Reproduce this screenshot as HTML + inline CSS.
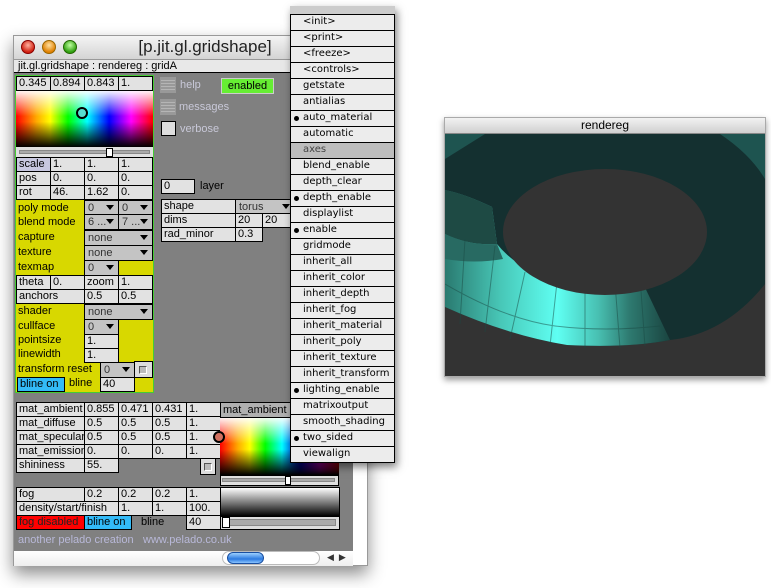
<!DOCTYPE html>
<html><head><meta charset="utf-8"><style>
*{margin:0;padding:0;box-sizing:border-box}
body{width:771px;height:588px;background:#fff;position:relative;overflow:hidden;font-family:"Liberation Sans","DejaVu Sans",sans-serif;font-size:11px;color:#000}
.a{position:absolute}
.c{position:absolute;border:1px solid #000;background:#e2e2e2;padding-left:2px;line-height:13px;height:15px;white-space:nowrap;overflow:hidden}
.y{position:absolute;line-height:14px;padding-left:2px;white-space:nowrap}
.d{position:absolute;border:1px solid #000;background:#c4c4c4;color:#333;padding-left:3px;line-height:14px;height:16px;white-space:nowrap;overflow:hidden}
.d:after{content:"";position:absolute;right:4px;top:4px;border-left:4px solid transparent;border-right:4px solid transparent;border-top:5px solid #000}
.m{position:absolute;left:0;width:105px;height:17px;border:1px solid #000;background:#ececec;padding-left:12px;line-height:14px;font-family:"DejaVu Sans",sans-serif;font-size:10px}
.m.b:before{content:"";position:absolute;left:3px;top:5px;width:5px;height:5px;border-radius:50%;background:#000}
</style></head><body>

<div class="a" style="left:13px;top:35px;width:355px;height:531px;background:#fff;box-shadow:0 8px 16px rgba(0,0,0,.45);border:1px solid #999"></div>
<div class="a" style="left:14px;top:36px;width:353px;height:23px;background:linear-gradient(#f4f4f4,#d4d4d4)"></div>
<div class="a" style="left:21px;top:40px;width:14px;height:14px;border-radius:50%;background:radial-gradient(circle at 50% 35%,#ffb0a0,#d02010 70%);border:1px solid #800"></div>
<div class="a" style="left:42px;top:40px;width:14px;height:14px;border-radius:50%;background:radial-gradient(circle at 50% 35%,#ffe0a0,#e08000 70%);border:1px solid #960"></div>
<div class="a" style="left:63px;top:40px;width:14px;height:14px;border-radius:50%;background:radial-gradient(circle at 50% 35%,#c0ffa0,#30a010 70%);border:1px solid #260"></div>
<div class="a" style="left:90px;top:37px;width:230px;text-align:center;font-size:17px;color:#222">[p.jit.gl.gridshape]</div>
<div class="a" style="left:14px;top:59px;width:339px;height:14px;background:#e8e8e8;border-bottom:1px solid #000;border-top:1px solid #999;padding-left:4px;line-height:12px">jit.gl.gridshape : rendereg : gridA</div>
<div class="a" style="left:14px;top:73px;width:339px;height:478px;background:#808080"></div>
<div class="a" style="left:353px;top:59px;width:14px;height:492px;background:#fff"></div>
<div class="a" style="left:14px;top:551px;width:339px;height:15px;background:linear-gradient(#fff,#eee)"></div>
<div class="a" style="left:222px;top:551px;width:98px;height:14px;border-radius:7px;border:1px solid #bbb;background:#fff"></div>
<div class="a" style="left:227px;top:552px;width:37px;height:12px;border-radius:6px;background:linear-gradient(#9cd0ff,#2c7ae0 60%,#8ac4ff);border:1px solid #1a4fa0"></div>
<div class="a" style="left:327px;top:552px;font-size:9px;color:#333">◀&nbsp;&nbsp;▶</div>

<div class="a" style="left:15px;top:75px;width:139px;height:318px;background:#d8d800;border:1px solid #44cc33"></div>
<div class="c" style="left:16px;top:76px;width:35px">0.345</div>
<div class="c" style="left:50px;top:76px;width:35px">0.894</div>
<div class="c" style="left:84px;top:76px;width:35px">0.843</div>
<div class="c" style="left:118px;top:76px;width:35px">1.</div>
<div class="a" style="left:16px;top:91px;width:137px;height:56px;background:linear-gradient(to bottom,rgba(255,255,255,.95),rgba(255,255,255,0) 45%,rgba(0,0,0,0) 55%,#000),linear-gradient(to right,#f00,#fa0 15%,#ff0 25%,#0f0 38%,#0ff 52%,#00f 68%,#f0f 84%,#f00)"></div>
<div class="a" style="left:76px;top:107px;width:12px;height:12px;border-radius:50%;border:2px solid #000;background:#58dcd0"></div>
<div class="a" style="left:16px;top:147px;width:137px;height:10px;background:#e0e0e0"></div>
<div class="a" style="left:19px;top:150px;width:131px;height:4px;background:#aaa;border:1px solid #888"></div>
<div class="a" style="left:106px;top:148px;width:7px;height:9px;background:#fff;border:1px solid #000"></div>
<div class="c" style="left:16px;top:157px;width:35px;background:#c8c8e0">scale</div>
<div class="c" style="left:50px;top:157px;width:35px">1.</div><div class="c" style="left:84px;top:157px;width:35px">1.</div><div class="c" style="left:118px;top:157px;width:35px">1.</div>
<div class="c" style="left:16px;top:171px;width:35px">pos</div>
<div class="c" style="left:50px;top:171px;width:35px">0.</div><div class="c" style="left:84px;top:171px;width:35px">0.</div><div class="c" style="left:118px;top:171px;width:35px">0.</div>
<div class="c" style="left:16px;top:185px;width:35px">rot</div>
<div class="c" style="left:50px;top:185px;width:35px">46.</div><div class="c" style="left:84px;top:185px;width:35px">1.62</div><div class="c" style="left:118px;top:185px;width:35px">0.</div>
<div class="y" style="left:16px;top:201px">poly mode</div>
<div class="d" style="left:84px;top:200px;width:35px">0</div><div class="d" style="left:118px;top:200px;width:35px">0</div>
<div class="y" style="left:16px;top:215px">blend mode</div>
<div class="d" style="left:84px;top:214px;width:35px">6 ...</div><div class="d" style="left:118px;top:214px;width:35px">7 ...</div>
<div class="y" style="left:16px;top:230px">capture</div>
<div class="d" style="left:84px;top:230px;width:69px">none</div>
<div class="y" style="left:16px;top:245px">texture</div>
<div class="d" style="left:84px;top:245px;width:69px">none</div>
<div class="y" style="left:16px;top:260px">texmap</div>
<div class="d" style="left:84px;top:260px;width:35px">0</div>
<div class="c" style="left:16px;top:275px;width:35px">theta</div><div class="c" style="left:50px;top:275px;width:35px">0.</div><div class="c" style="left:84px;top:275px;width:35px">zoom</div><div class="c" style="left:118px;top:275px;width:35px">1.</div>
<div class="c" style="left:16px;top:289px;width:69px">anchors</div><div class="c" style="left:84px;top:289px;width:35px">0.5</div><div class="c" style="left:118px;top:289px;width:35px">0.5</div>
<div class="y" style="left:16px;top:304px">shader</div>
<div class="d" style="left:84px;top:304px;width:69px">none</div>
<div class="y" style="left:16px;top:319px">cullface</div>
<div class="d" style="left:84px;top:319px;width:35px">0</div>
<div class="y" style="left:16px;top:333px">pointsize</div>
<div class="c" style="left:84px;top:334px;width:35px">1.</div>
<div class="y" style="left:16px;top:347px">linewidth</div>
<div class="c" style="left:84px;top:348px;width:35px">1.</div>
<div class="y" style="left:16px;top:362px">transform reset</div>
<div class="d" style="left:100px;top:362px;width:35px">0</div>
<div class="a" style="left:134px;top:361px;width:19px;height:17px;border:1px solid #000;background:#ddd"><div class="a" style="left:4px;top:4px;width:8px;height:8px;border:1px solid #555;border-right-color:#fff;border-bottom-color:#fff;background:#bbb"></div></div>
<div class="c" style="left:17px;top:377px;width:48px;background:#33bbf8;height:15px">bline on</div>
<div class="y" style="left:67px;top:376px">bline</div>
<div class="c" style="left:100px;top:377px;width:35px">40</div>

<div class="a" style="left:160px;top:77px;width:16px;height:16px;background:repeating-linear-gradient(#999 0 2px,#b5b5b5 2px 3px);border:1px solid #999"></div>
<div class="a" style="left:180px;top:79px;color:#c8c8d8;font-size:11px">help</div>
<div class="a" style="left:221px;top:78px;width:53px;height:16px;background:#66ee33;border:1px solid #ccc;text-align:center;line-height:14px">enabled</div>
<div class="a" style="left:160px;top:99px;width:16px;height:16px;background:repeating-linear-gradient(#999 0 2px,#b5b5b5 2px 3px);border:1px solid #999"></div>
<div class="a" style="left:179px;top:101px;color:#c8c8d8;font-size:11px">messages</div>
<div class="a" style="left:161px;top:121px;width:15px;height:15px;background:#ddd;border:1px solid #000"></div>
<div class="a" style="left:180px;top:123px;color:#c8c8d8;font-size:11px">verbose</div>
<div class="c" style="left:161px;top:179px;width:34px">0</div>
<div class="a" style="left:200px;top:180px;font-size:11px">layer</div>
<div class="c" style="left:161px;top:199px;width:75px">shape</div>
<div class="d" style="left:235px;top:199px;width:60px">torus</div>
<div class="c" style="left:161px;top:213px;width:75px">dims</div>
<div class="c" style="left:235px;top:213px;width:28px">20</div><div class="c" style="left:262px;top:213px;width:33px">20</div>
<div class="c" style="left:161px;top:227px;width:75px">rad_minor</div>
<div class="c" style="left:235px;top:227px;width:28px">0.3</div>

<div class="c" style="left:16px;top:402px;width:69px">mat_ambient</div><div class="c" style="left:84px;top:402px;width:35px">0.855</div><div class="c" style="left:118px;top:402px;width:35px">0.471</div><div class="c" style="left:152px;top:402px;width:35px">0.431</div><div class="c" style="left:186px;top:402px;width:35px">1.</div>
<div class="c" style="left:16px;top:416px;width:69px">mat_diffuse</div><div class="c" style="left:84px;top:416px;width:35px">0.5</div><div class="c" style="left:118px;top:416px;width:35px">0.5</div><div class="c" style="left:152px;top:416px;width:35px">0.5</div><div class="c" style="left:186px;top:416px;width:35px">1.</div>
<div class="c" style="left:16px;top:430px;width:69px">mat_specular</div><div class="c" style="left:84px;top:430px;width:35px">0.5</div><div class="c" style="left:118px;top:430px;width:35px">0.5</div><div class="c" style="left:152px;top:430px;width:35px">0.5</div><div class="c" style="left:186px;top:430px;width:35px">1.</div>
<div class="c" style="left:16px;top:444px;width:69px">mat_emission</div><div class="c" style="left:84px;top:444px;width:35px">0.</div><div class="c" style="left:118px;top:444px;width:35px">0.</div><div class="c" style="left:152px;top:444px;width:35px">0.</div><div class="c" style="left:186px;top:444px;width:35px">1.</div>
<div class="c" style="left:16px;top:458px;width:69px">shininess</div><div class="c" style="left:84px;top:458px;width:35px">55.</div>
<div class="a" style="left:200px;top:458px;width:16px;height:17px;border:1px solid #000;background:#ddd"><div class="a" style="left:3px;top:4px;width:8px;height:8px;border:1px solid #555;border-right-color:#fff;border-bottom-color:#fff;background:#bbb"></div></div>
<div class="a" style="left:220px;top:402px;width:119px;height:16px;background:#b0b0b0;border:1px solid #000;padding-left:2px;line-height:14px">mat_ambient</div>
<div class="a" style="left:220px;top:418px;width:119px;height:57px;background:linear-gradient(to bottom,rgba(255,255,255,.95),rgba(255,255,255,0) 45%,rgba(0,0,0,0) 55%,#000),linear-gradient(to right,#f00,#fa0 15%,#ff0 25%,#0f0 38%,#0ff 52%,#00f 68%,#f0f 84%,#f00)"></div>
<div class="a" style="left:213px;top:431px;width:12px;height:12px;border-radius:50%;border:2px solid #000;background:#d07060"></div>
<div class="a" style="left:220px;top:475px;width:119px;height:11px;background:#e0e0e0;border:1px solid #000"></div>
<div class="a" style="left:222px;top:478px;width:113px;height:4px;background:#aaa;border:1px solid #888"></div>
<div class="a" style="left:285px;top:476px;width:6px;height:9px;background:#fff;border:1px solid #000"></div>
<div class="c" style="left:16px;top:487px;width:69px">fog</div><div class="c" style="left:84px;top:487px;width:35px">0.2</div><div class="c" style="left:118px;top:487px;width:35px">0.2</div><div class="c" style="left:152px;top:487px;width:35px">0.2</div><div class="c" style="left:186px;top:487px;width:35px">1.</div>
<div class="c" style="left:16px;top:501px;width:103px">density/start/finish</div><div class="c" style="left:118px;top:501px;width:35px">1.</div><div class="c" style="left:152px;top:501px;width:35px">1.</div><div class="c" style="left:186px;top:501px;width:35px">100.</div>
<div class="c" style="left:16px;top:515px;width:69px;background:#f00;color:#222">fog disabled</div>
<div class="c" style="left:84px;top:515px;width:48px;background:#33bbf8">bline on</div>
<div class="a" style="left:141px;top:516px">bline</div>
<div class="c" style="left:186px;top:515px;width:35px">40</div>
<div class="a" style="left:220px;top:487px;width:120px;height:30px;border:1px solid #000;background:linear-gradient(#fff,#000)"></div>
<div class="a" style="left:220px;top:516px;width:120px;height:14px;border:1px solid #000;background:#ddd"></div>
<div class="a" style="left:223px;top:519px;width:113px;height:7px;background:#aaa;border:1px solid #888"></div>
<div class="a" style="left:222px;top:517px;width:8px;height:11px;background:#fff;border:1px solid #000"></div>
<div class="a" style="left:18px;top:534px;color:#b8b8d8;font-size:11px">another pelado creation</div>
<div class="a" style="left:143px;top:534px;color:#b8b8d8;font-size:11px">www.pelado.co.uk</div>

<div class="a" style="left:290px;top:6px;width:105px;height:457px;background:#ccc;box-shadow:2px 4px 8px rgba(0,0,0,.5)">
<div class="m" style="top:8px">&lt;init&gt;</div>
<div class="m" style="top:24px">&lt;print&gt;</div>
<div class="m" style="top:40px">&lt;freeze&gt;</div>
<div class="m" style="top:56px">&lt;controls&gt;</div>
<div class="m" style="top:72px">getstate</div>
<div class="m" style="top:88px">antialias</div>
<div class="m b" style="top:104px">auto_material</div>
<div class="m" style="top:120px">automatic</div>
<div class="m" style="top:136px;background:#bdbdbd;color:#444">axes</div>
<div class="m" style="top:152px">blend_enable</div>
<div class="m" style="top:168px">depth_clear</div>
<div class="m b" style="top:184px">depth_enable</div>
<div class="m" style="top:200px">displaylist</div>
<div class="m b" style="top:216px">enable</div>
<div class="m" style="top:232px">gridmode</div>
<div class="m" style="top:248px">inherit_all</div>
<div class="m" style="top:264px">inherit_color</div>
<div class="m" style="top:280px">inherit_depth</div>
<div class="m" style="top:296px">inherit_fog</div>
<div class="m" style="top:312px">inherit_material</div>
<div class="m" style="top:328px">inherit_poly</div>
<div class="m" style="top:344px">inherit_texture</div>
<div class="m" style="top:360px">inherit_transform</div>
<div class="m b" style="top:376px">lighting_enable</div>
<div class="m" style="top:392px">matrixoutput</div>
<div class="m" style="top:408px">smooth_shading</div>
<div class="m b" style="top:424px">two_sided</div>
<div class="m" style="top:440px">viewalign</div>
</div>

<div class="a" style="left:444px;top:117px;width:322px;height:260px;border:1px solid #aaa;box-shadow:0 3px 6px rgba(0,0,0,.4)"></div>
<div class="a" style="left:445px;top:118px;width:320px;height:16px;background:linear-gradient(#f2f2f2,#d0d0d0);border-bottom:1px solid #888;text-align:center;font-size:12px;line-height:15px">rendereg</div>
<svg class="a" style="left:445px;top:134px" width="320" height="242" viewBox="0 0 320 242">
<defs><linearGradient id="g" x1="0" x2="225" gradientUnits="userSpaceOnUse"><stop offset="0" stop-color="#2a7a70"/><stop offset=".25" stop-color="#48c8b8"/><stop offset=".5" stop-color="#5ffff2"/><stop offset=".68" stop-color="#48c0b2"/><stop offset=".82" stop-color="#2e7a70"/><stop offset="1" stop-color="#1a4440"/></linearGradient></defs>
<rect width="320" height="242" fill="#333"/>
<path d="M0 0H320V150Q280 200 225 206Q185 214 122 211Q62 201 0 173Z" fill="#143030"/>
<path d="M0 0H40L0 25Z M275 0H320V45Q305 20 275 0Z" fill="#1e5450"/>
<path d="M0 173Q62 201 122 211Q185 214 225 206L195 143Q142 152 112 148Q72 135 52 110L47 73Q20 60 0 56Z" fill="url(#g)"/>
<path d="M0 56Q20 60 47 73L52 110Q25 112 0 100Z" fill="#1e4a44"/>
<path d="M0 100Q25 112 52 110L58 125Q30 130 0 125Z" fill="#286a62"/>
<g stroke="#1a4a44" stroke-width="1" fill="none" opacity=".5">
<path d="M0 150Q60 185 110 192Q160 198 215 192"/>
<path d="M20 105L15 190M50 112L40 198M80 138L65 205M112 148L105 212M140 151L140 214M170 149L175 214M195 143L200 212"/>
</g>
<ellipse cx="160" cy="98" rx="102" ry="63" fill="#333"/>
</svg>
</body></html>
